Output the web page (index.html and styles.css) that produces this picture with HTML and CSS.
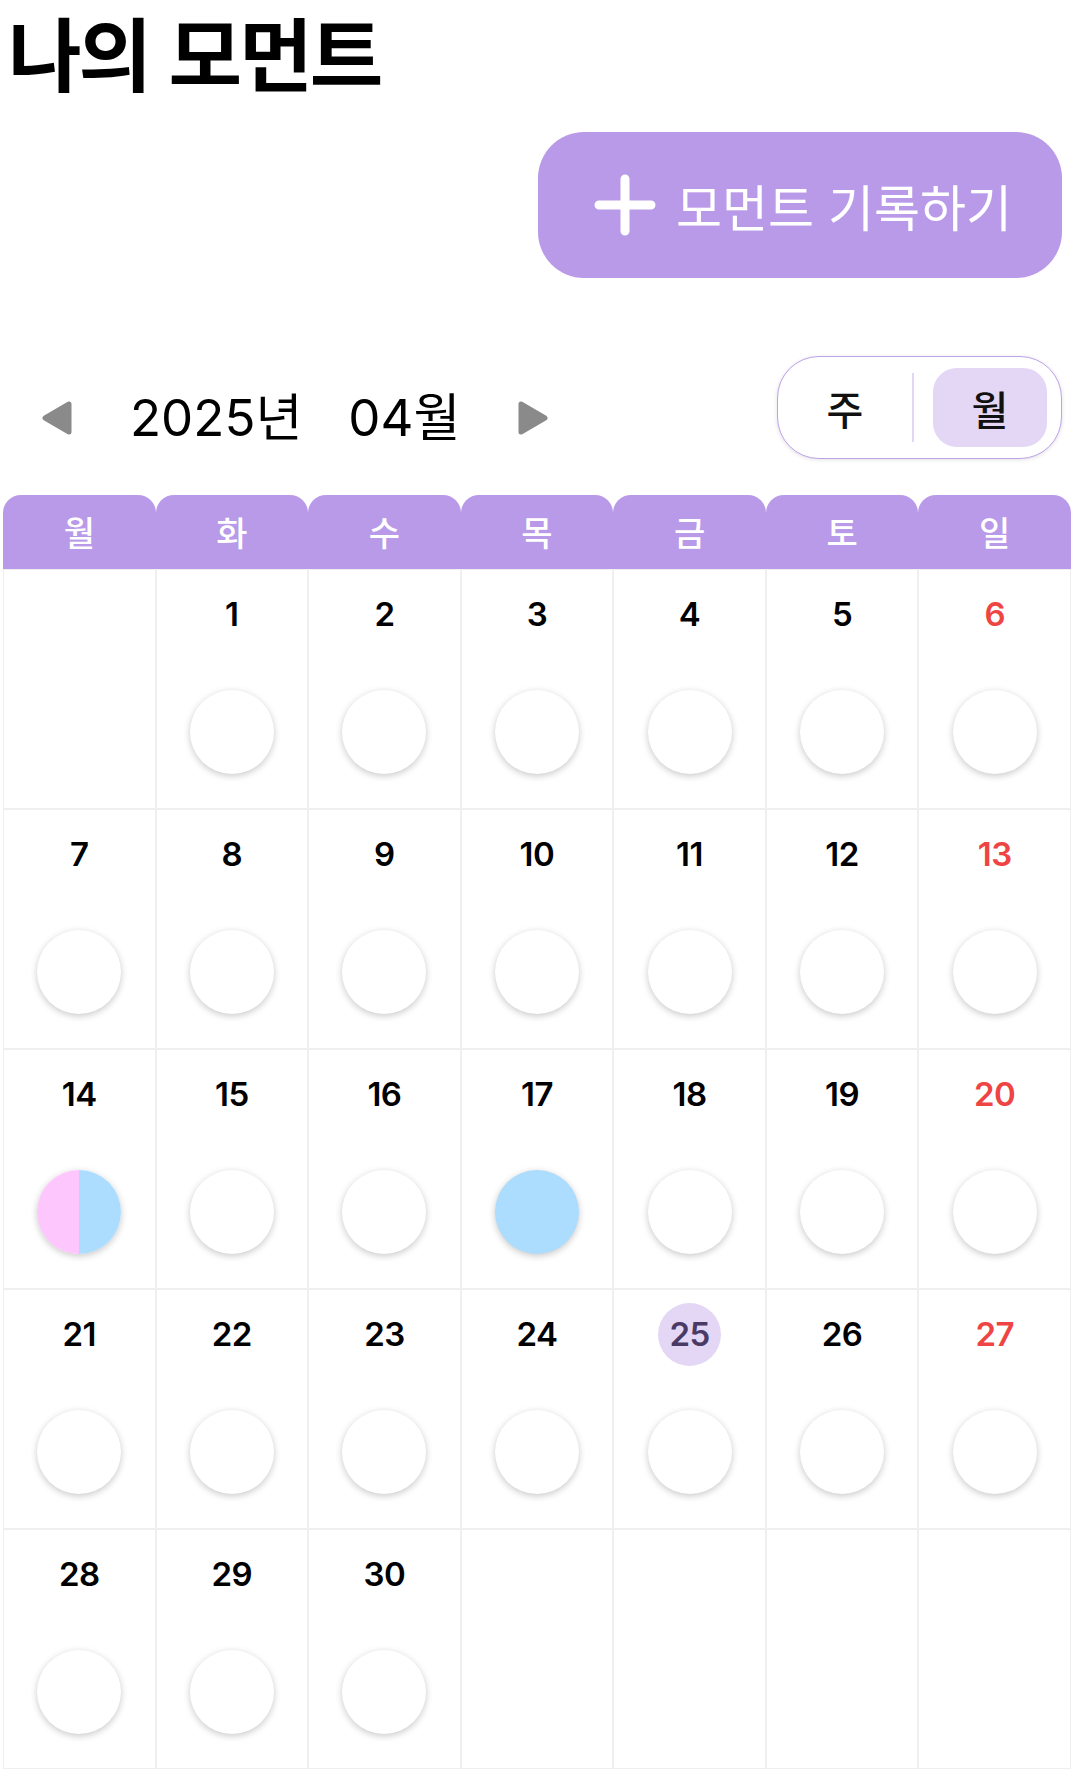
FILE: index.html
```html
<!DOCTYPE html>
<html lang="ko">
<head>
<meta charset="utf-8">
<title>나의 모먼트</title>
<link rel="stylesheet" href="styles.css">
</head>
<body>
<div class="top">
  <h1 class="title">나의 모먼트</h1>
  <div class="actions">
    <button class="record-btn">
      <svg class="plus" width="62" height="62" viewBox="0 0 62 62"><path d="M31 5 V57 M5 31 H57" stroke="#fff" stroke-width="9" stroke-linecap="round" fill="none"/></svg>
      <span class="record-label">모먼트 기록하기</span>
    </button>
  </div>
  <div class="nav-row">
    <div class="month-nav">
      <svg class="arrow" width="31" height="34" viewBox="0 0 31 34"><path d="M27 3 V31 L3 17 Z" fill="#8a8a8a" stroke="#8a8a8a" stroke-width="5" stroke-linejoin="round"/></svg>
      <div class="month-text"><span class="year">2025년</span><span class="month">04월</span></div>
      <svg class="arrow" width="31" height="34" viewBox="0 0 31 34"><path d="M4 3 V31 L28 17 Z" fill="#8a8a8a" stroke="#8a8a8a" stroke-width="5" stroke-linejoin="round"/></svg>
    </div>
    <div class="toggle">
      <span class="seg">주</span>
      <span class="divider"></span>
      <span class="seg active">월</span>
    </div>
  </div>
</div>

<div class="calendar">
  <div class="week-head">
    <div class="tab">월</div><div class="tab">화</div><div class="tab">수</div><div class="tab">목</div><div class="tab">금</div><div class="tab">토</div><div class="tab">일</div>
  </div>
  <div class="grid">
    <div class="cell"></div>
    <div class="cell"><span class="num">1</span><span class="dot"></span></div>
    <div class="cell"><span class="num">2</span><span class="dot"></span></div>
    <div class="cell"><span class="num">3</span><span class="dot"></span></div>
    <div class="cell"><span class="num">4</span><span class="dot"></span></div>
    <div class="cell"><span class="num">5</span><span class="dot"></span></div>
    <div class="cell"><span class="num sun">6</span><span class="dot"></span></div>

    <div class="cell"><span class="num">7</span><span class="dot"></span></div>
    <div class="cell"><span class="num">8</span><span class="dot"></span></div>
    <div class="cell"><span class="num">9</span><span class="dot"></span></div>
    <div class="cell"><span class="num">10</span><span class="dot"></span></div>
    <div class="cell"><span class="num">11</span><span class="dot"></span></div>
    <div class="cell"><span class="num">12</span><span class="dot"></span></div>
    <div class="cell"><span class="num sun">13</span><span class="dot"></span></div>

    <div class="cell"><span class="num">14</span><span class="dot split"></span></div>
    <div class="cell"><span class="num">15</span><span class="dot"></span></div>
    <div class="cell"><span class="num">16</span><span class="dot"></span></div>
    <div class="cell"><span class="num">17</span><span class="dot blue"></span></div>
    <div class="cell"><span class="num">18</span><span class="dot"></span></div>
    <div class="cell"><span class="num">19</span><span class="dot"></span></div>
    <div class="cell"><span class="num sun">20</span><span class="dot"></span></div>

    <div class="cell"><span class="num">21</span><span class="dot"></span></div>
    <div class="cell"><span class="num">22</span><span class="dot"></span></div>
    <div class="cell"><span class="num">23</span><span class="dot"></span></div>
    <div class="cell"><span class="num">24</span><span class="dot"></span></div>
    <div class="cell"><span class="num today">25</span><span class="dot"></span></div>
    <div class="cell"><span class="num">26</span><span class="dot"></span></div>
    <div class="cell"><span class="num sun">27</span><span class="dot"></span></div>

    <div class="cell"><span class="num">28</span><span class="dot"></span></div>
    <div class="cell"><span class="num">29</span><span class="dot"></span></div>
    <div class="cell"><span class="num">30</span><span class="dot"></span></div>
    <div class="cell"></div>
    <div class="cell"></div>
    <div class="cell"></div>
    <div class="cell"></div>
  </div>
</div>
</body>
</html>
```
FILE: styles.css
```css
* { box-sizing: border-box; }
html, body { margin: 0; padding: 0; background: #fff; }
body {
  font-family: "Noto Sans CJK KR", sans-serif;
  color: #000;
  overflow-x: hidden;
}
.top { padding: 0 9px 0 8px; }
.title {
  margin: -8px 0 0 0;
  padding: 0;
  font-size: 80px;
  line-height: normal;
  font-weight: 700;
  letter-spacing: -3px;
}
.actions { display: flex; justify-content: flex-end; margin-top: 24px; }
.record-btn {
  display: flex;
  align-items: center;
  justify-content: center;
  gap: 20px;
  width: 524px;
  height: 146px;
  border: none;
  border-radius: 46px;
  background: #b99ae9;
  color: #fff;
  font-family: "Noto Sans CJK KR", sans-serif;
  padding: 0 0 0 6px;
}
.record-label {
  font-size: 50px;
  font-weight: 400;
  letter-spacing: 0;
  line-height: 1;
}
.nav-row {
  display: flex;
  justify-content: space-between;
  align-items: center;
  margin-top: 78px;
}
.month-nav {
  display: flex;
  align-items: center;
  padding-left: 34px;
  padding-top: 20px;
  gap: 57px;
}
.month-text {
  font-family: Inter, "Noto Sans CJK KR", sans-serif;
  font-size: 51px;
  font-weight: 400;
  line-height: 1;
}
.month { margin-left: 46px; }
.toggle {
  display: flex;
  align-items: center;
  height: 103px;
  border: 1px solid #bda2ec;
  border-radius: 42px;
  padding: 0 14px 0 10px;
  box-shadow: 0 1px 4px rgba(0,0,0,0.12);
  background: #fff;
}
.seg {
  width: 114px;
  height: 79px;
  display: flex;
  align-items: center;
  justify-content: center;
  font-size: 40px;
  font-weight: 500;
  border-radius: 24px;
  color: #111;
}
.seg.active { background: #e4d7f5; }
.divider {
  width: 2px;
  height: 69px;
  background: #e2d6f4;
  margin: 0 19px 0 10px;
}
.calendar { margin: 36px 0 0 3px; }
.week-head {
  display: grid;
  grid-template-columns: repeat(7, 1fr);
  height: 74px;
}
.tab {
  background: #b99ae9;
  border-radius: 18px 18px 0 0;
  color: #fff;
  font-size: 34px;
  font-weight: 500;
  display: flex;
  align-items: center;
  justify-content: center;
  padding-bottom: 2px;
}
.grid {
  display: grid;
  grid-template-columns: repeat(7, 1fr);
  grid-auto-rows: 240px;
}
.cell {
  border: 1px solid #efefef;
  display: flex;
  flex-direction: column;
  align-items: center;
  padding-top: 13px;
}
.num {
  font-family: Inter, "Noto Sans CJK KR", sans-serif;
  font-size: 33px;
  font-weight: 600;
  height: 63px;
  min-width: 63px;
  line-height: 63px;
  text-align: center;
  letter-spacing: -0.5px;
}
.num.sun { color: #ef4444; }
.num.today {
  background: #e4d7f5;
  border-radius: 50%;
  color: #4a3a66;
}
.dot {
  margin-top: 44px;
  width: 84px;
  height: 84px;
  border-radius: 50%;
  background: #fff;
  box-shadow: 0 2px 7px rgba(0,0,0,0.22);
}
.dot.blue { background: #acdcfe; }
.dot.split { background: linear-gradient(90deg, #fdc6fd 50%, #acdcfe 50%); }
```
